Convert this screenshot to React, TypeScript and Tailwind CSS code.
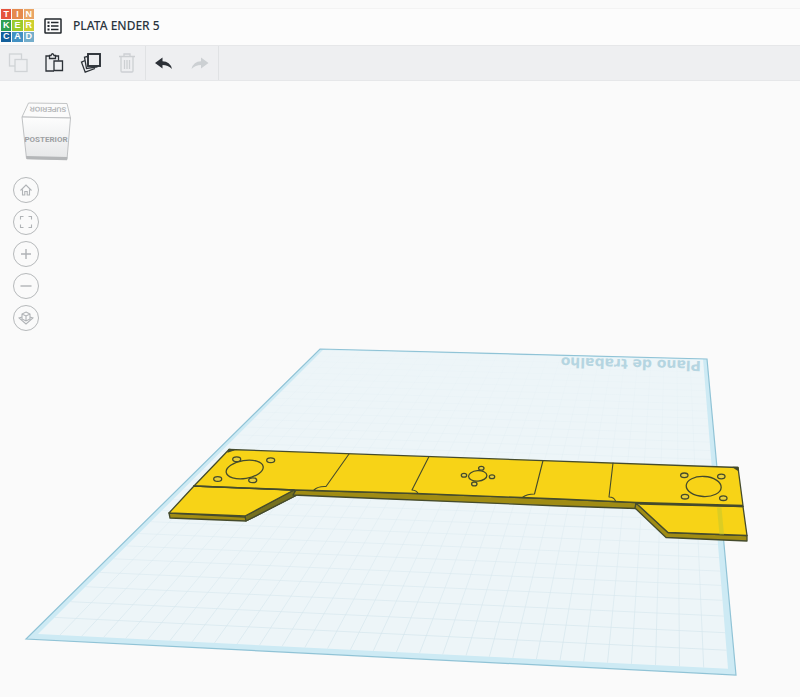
import { ReactNode } from "react";

const LOGO_TILES = [
  { letter: "T", color: "bg-[#e5533d]" },
  { letter: "I", color: "bg-[#e58a4e]" },
  { letter: "N", color: "bg-[#eaa565]" },
  { letter: "K", color: "bg-[#2f9f52]" },
  { letter: "E", color: "bg-[#9ccb2c]" },
  { letter: "R", color: "bg-[#cdcf2e]" },
  { letter: "C", color: "bg-[#14609c]" },
  { letter: "A", color: "bg-[#4391c3]" },
  { letter: "D", color: "bg-[#74adcb]" },
];

type Point = [number, number];

// corners of the workplane on screen: top left, top right, bottom right, bottom left
const CORNERS: Point[] = [
  [320, 349],
  [707, 359],
  [736, 675],
  [26, 639],
];

// projects a point of the unit square onto the workplane
function project(u: number, v: number): Point {
  const [[x0, y0], [x1, y1], [x2, y2], [x3, y3]] = CORNERS;
  const dx1 = x1 - x2;
  const dx2 = x3 - x2;
  const dx3 = x0 - x1 + x2 - x3;
  const dy1 = y1 - y2;
  const dy2 = y3 - y2;
  const dy3 = y0 - y1 + y2 - y3;
  const det = dx1 * dy2 - dx2 * dy1;
  const g = (dx3 * dy2 - dx2 * dy3) / det;
  const h = (dx1 * dy3 - dx3 * dy1) / det;
  const w = g * u + h * v + 1;
  return [
    ((x1 - x0 + g * x1) * u + (x3 - x0 + h * x3) * v + x0) / w,
    ((y1 - y0 + g * y1) * u + (y3 - y0 + h * y3) * v + y0) / w,
  ];
}

function line(a: Point, b: Point) {
  return `M${a[0].toFixed(1)} ${a[1].toFixed(1)}L${b[0].toFixed(1)} ${b[1].toFixed(1)}`;
}

const MARGIN = 0.01;
const CELLS = 30;

function gridPath() {
  let d = "";
  for (let i = 1; i < CELLS; i++) {
    const t = MARGIN + (i / CELLS) * (1 - 2 * MARGIN);
    d += line(project(t, MARGIN), project(t, 1 - MARGIN));
    d += line(project(MARGIN, t), project(1 - MARGIN, t));
  }
  return d;
}

function toPoints(points: Point[]) {
  return points.map((p) => p.join(",")).join(" ");
}

const HOLES = [
  [236.7, 459.3, 4, 2.4],
  [270.7, 460.3, 4, 2.4],
  [217.7, 479, 4, 2.4],
  [252.7, 480.3, 4, 2.4],
  [481.3, 468.3, 2.7, 1.9],
  [464, 475.3, 2.7, 1.9],
  [492, 476.7, 2.7, 1.9],
  [474.3, 483.9, 2.7, 1.9],
  [684.3, 475.3, 3.7, 2.3],
  [721.3, 476.5, 3.7, 2.3],
  [685, 496.7, 3.7, 2.3],
  [723.3, 498.2, 3.7, 2.3],
];

function Scene() {
  const inner = [
    project(MARGIN, MARGIN / 2),
    project(1 - MARGIN, MARGIN / 2),
    project(1 - MARGIN, 1 - MARGIN),
    project(MARGIN, 1 - MARGIN),
  ];

  return (
    <svg
      viewBox="0 81 800 616"
      className="col-start-1 row-start-1 w-full"
      role="img"
      aria-label="Plano de trabalho"
    >
      <defs>
        <linearGradient id="gridFade" gradientUnits="userSpaceOnUse" x1="0" y1="360" x2="0" y2="670">
          <stop offset="0" stopColor="#dceaf0" stopOpacity="0.1" />
          <stop offset="0.4" stopColor="#dceaf0" stopOpacity="0.4" />
          <stop offset="1" stopColor="#d3e5ec" stopOpacity="0.85" />
        </linearGradient>
      </defs>
      <polygon points={toPoints(CORNERS)} fill="#cdeaf4" stroke="#90c3d6" strokeWidth="1.2" />
      <polygon points={toPoints(inner)} fill="#edf5f8" />
      <path d={gridPath()} stroke="url(#gridFade)" strokeWidth="0.9" fill="none" />
      <text
        transform="translate(701 361) rotate(181.5)"
        className="font-['DejaVu_Sans',sans-serif] text-[14px] font-bold"
        fill="#b5d5e1"
      >
        Plano de trabalho
      </text>

      <g stroke="#454b2c" strokeWidth="1.3" strokeLinejoin="round" strokeLinecap="round">
        {/* side faces */}
        <path d="M169 513L245 517L296 490L296 495.5L246 521L170 518Z" fill="#a08c14" />
        <path d="M245 516L294 490L296 495.5L246 521Z" fill="#75701f" />
        <path d="M296 490L416 493.5L560 499L636 502.5V508.5L560 506L340 497L293 495Z" fill="#a08c14" />
        <path d="M636 503L668 532.5L747 535.5V541L666 537.5L635 508Z" fill="#a08c14" />
        {/* top faces */}
        <path d="M194 486L169 513L245 516L294 490Z" fill="#f7d317" />
        <path d="M636 503L668 532.5L747 535.5L743 506.5Z" fill="#f7d317" />
        <path d="M229 449.5L738 467.5L743 505.5L636 502.5L560 499L416 493.5L296 490L194 486Z" fill="#f7d317" />
        <path d="M194 486L294 490M640 504L743 506.5" strokeWidth="1.7" />
        <path d="M229 449.5L234 449.8L228 452ZM733 467.3L738 467.5L738.5 470.5Z" fill="#454b2c" />
        {/* panel joints */}
        <path
          d="M349 454L326 486.5Q318 486 314 490M429 456.5L412 490Q417 490.5 418 493.5M543 460.5L534.5 494Q527 494 523 497M613 463L609 497Q614 497 615.5 501"
          fill="none"
          strokeWidth="1.1"
        />
        <ellipse cx="244.7" cy="469.5" rx="18.7" ry="9" transform="rotate(-9 244.7 469.5)" fill="none" />
        <ellipse cx="477.7" cy="475.9" rx="9.2" ry="5.2" transform="rotate(-4 477.7 475.9)" fill="none" />
        <ellipse cx="703.7" cy="486.5" rx="17.5" ry="10" transform="rotate(3 703.7 486.5)" fill="none" />
        {HOLES.map(([cx, cy, rx, ry]) => (
          <ellipse key={`${cx}-${cy}`} cx={cx} cy={cy} rx={rx} ry={ry} fill="#e9cf3a" />
        ))}
      </g>
      <path d="M717 507.5H721.5L724 534.5H719.5Z" fill="#c9c92c" opacity="0.6" />
    </svg>
  );
}

function ViewCube() {
  return (
    <button type="button" aria-label="Posterior" className="ml-5 block">
      <svg width="52" height="60" viewBox="20 102 52 60">
        <defs>
          <linearGradient id="cubeFace" x1="0" y1="0" x2="0" y2="1">
            <stop offset="0" stopColor="#fdfdfd" />
            <stop offset="1" stopColor="#e6e7e8" />
          </linearGradient>
        </defs>
        <path d="M28.5 103L67 103.5L70.5 118L22 117Z" fill="#fbfbfb" stroke="#bcbec0" strokeWidth="0.9" />
        <path d="M22 117L70.5 118L67 159.5L26.5 158.5Z" fill="url(#cubeFace)" stroke="#b9bbbd" strokeWidth="0.9" />
        <path d="M26 156L67.3 157L67 160.2L26.8 159.2Z" fill="#b4b6b8" />
        <text
          x="46"
          y="142"
          textAnchor="middle"
          className="font-[Roboto,sans-serif] text-[8px] font-bold"
          fill="#9da0a3"
        >
          POSTERIOR
        </text>
        <text
          transform="translate(48 107) rotate(181)"
          textAnchor="middle"
          className="font-['Liberation_Sans',sans-serif] text-[7px] font-bold"
          fill="#b4b6b8"
        >
          SUPERIOR
        </text>
      </svg>
    </button>
  );
}

interface ButtonProps {
  label: string;
  children: ReactNode;
  className?: string;
}

function ToolButton({ label, children, className = "text-[#2c3137]" }: Readonly<ButtonProps>) {
  return (
    <button type="button" aria-label={label} className={`flex h-full w-9 items-center justify-center ${className}`}>
      <svg width="22" height="22" viewBox="0 0 22 22" fill="none" stroke="currentColor" strokeWidth="1.3">
        {children}
      </svg>
    </button>
  );
}

function ViewButton({ label, children }: Readonly<ButtonProps>) {
  return (
    <button
      type="button"
      aria-label={label}
      className="flex size-[26px] items-center justify-center rounded-full border border-[#b6b9bb] text-[#b0b3b6]"
    >
      <svg width="16" height="16" viewBox="0 0 16 16" fill="none" stroke="currentColor" strokeWidth="1.1">
        {children}
      </svg>
    </button>
  );
}

export default function App() {
  return (
    <div className="flex min-h-screen flex-col bg-[#fafafa] pt-2 font-['Noto_Sans',sans-serif]">
      <header className="flex h-[37px] items-center border-t border-[#f3f3f3] bg-[#fcfcfc] pb-[3px] pl-px">
        <a href="#" aria-label="Tinkercad" className="grid size-[33px] grid-cols-3 grid-rows-3 gap-px">
          {LOGO_TILES.map((tile) => (
            <span
              key={tile.letter}
              className={`flex min-h-0 items-center justify-center font-['Liberation_Sans',sans-serif] text-[9px] leading-none font-bold text-white ${tile.color}`}
            >
              {tile.letter}
            </span>
          ))}
        </a>
        <button type="button" aria-label="Menu" className="ml-[10px] text-[#22272c]">
          <svg width="18" height="16" viewBox="0 0 18 16" fill="none" stroke="currentColor" strokeWidth="1.5">
            <rect x="1" y="1" width="16" height="14" rx="0.5" />
            <path d="M7 4.5H14.5M7 8H14.5M7 11.5H14.5" />
            <path d="M3.5 4.5H5.5M3.5 8H5.5M3.5 11.5H5.5" strokeWidth="1.8" />
          </svg>
        </button>
        <h1 className="ml-[11px] text-[12px] font-medium text-[#2b3640]">PLATA ENDER 5</h1>
      </header>

      <nav className="flex h-9 border-y border-[#e6e7e9] bg-[#eeeff1] pl-px">
        <div className="flex border-r border-[#e0e2e4]">
          <ToolButton label="Copiar" className="text-[#d0d3d6]">
            <rect x="1.5" y="2" width="12" height="12" />
            <rect x="7" y="7.5" width="12" height="12" fill="#eeeff1" />
          </ToolButton>
          <ToolButton label="Colar">
            <path d="M10 19H2V4H5.5M11.5 4H14.5V8.5" />
            <path d="M5.5 6.5V3.5H7Q8.5 0 10 3.5H11.5V6.5Z" />
            <path d="M10 9H18.5V18.5H10Z" />
          </ToolButton>
          <ToolButton label="Duplicar">
            <path d="M7.5 4.5L4.5 5.2L6.5 16.5L17.5 14.8M5 8.5L1.5 10.2L5.2 20.2L15 16.5" />
            <rect x="8" y="2" width="12" height="12" strokeWidth="1.9" />
          </ToolButton>
          <ToolButton label="Excluir" className="text-[#cdd0d3]">
            <path d="M3 4.5H19M8 4V2H14V4M5 4.5V19Q5 20 6 20H16Q17 20 17 19V4.5M8.5 8V17M11 8V17M13.5 8V17" />
          </ToolButton>
        </div>
        <div className="flex border-r border-[#e0e2e4]">
          <ToolButton label="Desfazer">
            <path d="M2 11L9.5 5.5V9.3Q17 9.3 19 17Q15 13 9.5 13V16.5Z" fill="currentColor" stroke="none" />
          </ToolButton>
          <ToolButton label="Refazer" className="text-[#ccd0d3]">
            <path d="M19.5 11L12 5.5V9.3Q4.5 9.3 2.5 17Q6.5 13 12 13V16.5Z" fill="currentColor" stroke="none" />
          </ToolButton>
        </div>
      </nav>

      <main className="grid flex-1 items-start">
        <Scene />
        <div className="z-10 col-start-1 row-start-1 flex w-20 flex-col gap-[15px] pt-[21px]">
          <ViewCube />
          <div className="flex flex-col gap-[6px] pl-[13px]">
            <ViewButton label="Vista inicial">
              <path d="M2.5 8.5L8 3L13.5 8.5M4.5 7.5V13H6.8V9.5H9.2V13H11.5V7.5" />
            </ViewButton>
            <ViewButton label="Ajustar à vista">
              <path d="M2.5 5.5V2.5H5.5M10.5 2.5H13.5V5.5M13.5 10.5V13.5H10.5M5.5 13.5H2.5V10.5" />
            </ViewButton>
            <ViewButton label="Mais zoom">
              <path d="M3 8H13M8 3V13" strokeWidth="1.4" />
            </ViewButton>
            <ViewButton label="Menos zoom">
              <path d="M2.5 8H13.5" strokeWidth="1.4" />
            </ViewButton>
            <ViewButton label="Perspectiva">
              <path d="M8 2L12 4V9L8 11L4 9V4ZM4 4L8 6L12 4M8 6V11M4 7L1 8L8 14L15 8L12 7" />
            </ViewButton>
          </div>
        </div>
      </main>
    </div>
  );
}
